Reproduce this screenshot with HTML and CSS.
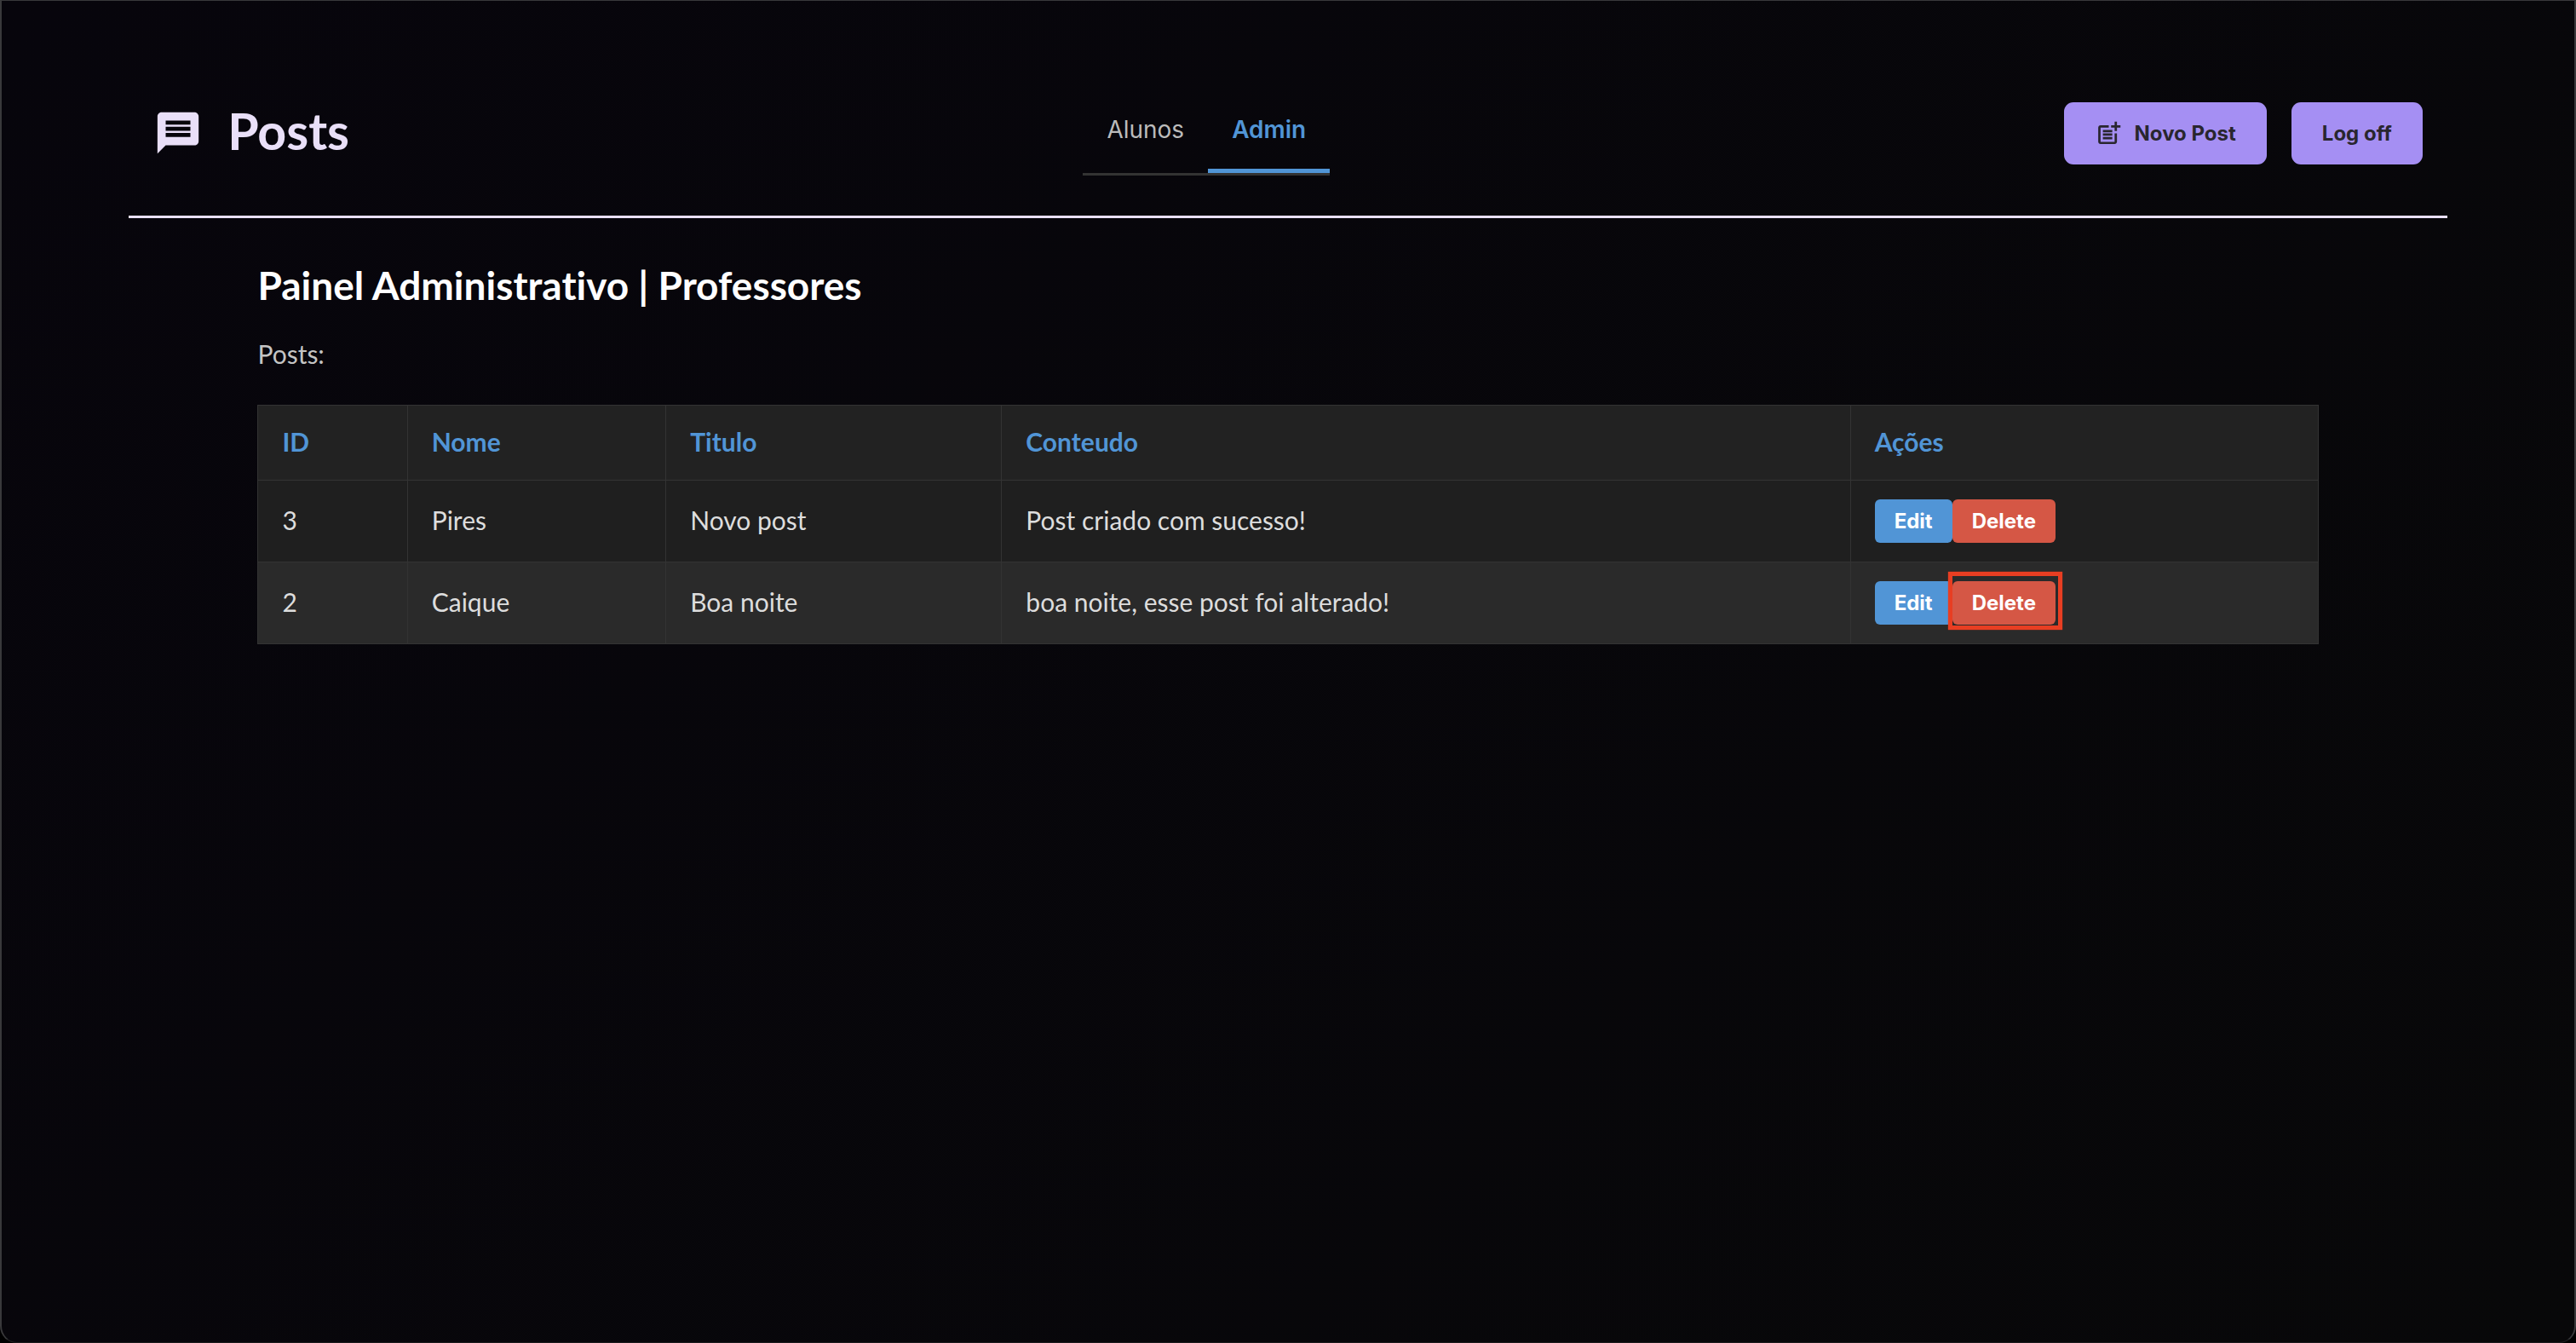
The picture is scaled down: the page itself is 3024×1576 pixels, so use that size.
FILE: index.html
```html
<!DOCTYPE html>
<html lang="pt-BR">
<head>
<meta charset="utf-8">
<meta name="viewport" content="width=device-width, initial-scale=1">
<title>Posts</title>
<link rel="stylesheet" href="styles.css">
</head>
<body>
<div class="app">
  <header class="header">
    <div class="brand">
      <svg class="brand-icon" viewBox="0 0 24 24" fill="currentColor" aria-hidden="true"><path d="M20 2H4c-1.1 0-1.99.9-1.99 2L2 22l4-4h14c1.1 0 2-.9 2-2V4c0-1.1-.9-2-2-2zm-2 12H6v-2h12v2zm0-3H6V9h12v2zm0-3H6V6h12v2z"/></svg>
      <h1 class="brand-title">Posts</h1>
    </div>
    <nav class="tabs">
      <a class="tab" href="#alunos">Alunos</a>
      <a class="tab tab-active" href="#admin" aria-current="page">Admin</a>
    </nav>
    <div class="header-actions">
      <button class="button" type="button">
        <svg class="button-icon" viewBox="0 0 24 24" fill="currentColor" aria-hidden="true"><path d="M17 19.22H5V7h7V5H5c-1.1 0-2 .9-2 2v12c0 1.1.9 2 2 2h12c1.1 0 2-.9 2-2v-7h-2v7.22z"/><path d="M19 2h-2v3h-3c.01.01 0 2 0 2h3v2.99c.01.01 2 0 2 0V7h3V5h-3V2zM7 9h8v2H7zM7 12v2h8v-2h-3zM7 15h8v2H7z"/></svg>
        Novo Post
      </button>
      <button class="button" type="button">Log off</button>
    </div>
  </header>
  <main class="panel">
    <h2 class="panel-title">Painel Administrativo | Professores</h2>
    <p class="panel-label">Posts:</p>
    <table class="posts">
      <colgroup>
        <col class="col-id"><col class="col-name"><col class="col-title"><col class="col-content"><col class="col-actions">
      </colgroup>
      <thead>
        <tr><th>ID</th><th>Nome</th><th>Titulo</th><th>Conteudo</th><th>Ações</th></tr>
      </thead>
      <tbody>
        <tr>
          <td>3</td><td>Pires</td><td>Novo post</td><td>Post criado com sucesso!</td>
          <td class="actions-cell">
            <div class="actions">
              <button class="action edit" type="button">Edit</button>
              <button class="action delete" type="button">Delete</button>
            </div>
          </td>
        </tr>
        <tr>
          <td>2</td><td>Caique</td><td>Boa noite</td><td>boa noite, esse post foi alterado!</td>
          <td class="actions-cell">
            <div class="actions">
              <button class="action edit" type="button">Edit</button>
              <button class="action delete highlighted" type="button">Delete</button>
            </div>
          </td>
        </tr>
      </tbody>
    </table>
  </main>
</div>
</body>
</html>
```
FILE: styles.css
```css
* {
  box-sizing: border-box;
}

html {
  background: #000;
}

body {
  margin: 0;
  font-family: Lato, sans-serif;
  font-variant-ligatures: none;
  color: #ddd;
}

.app {
  min-height: 100vh;
  padding-top: 58px;
  border: 2px solid #39393b;
  border-top-width: 1px;
  border-bottom: 1px solid #1c1c1e;
  border-radius: 0 0 20px 20px;
  background: linear-gradient(135deg, #07050c, #080809);
}

.header {
  display: flex;
  justify-content: space-between;
  align-items: center;
  width: 90vw;
  margin: 0 auto;
  padding: 47px 29px;
  border-bottom: 3px solid #e9dff8;
}

.brand {
  display: flex;
  align-items: center;
  gap: 29px;
  color: #e9dff8;
}

.brand-icon {
  width: 58px;
  height: 58px;
}

.brand-title {
  margin: 0;
  padding-bottom: 4px;
  font-size: 59px;
  line-height: 72px;
  font-weight: 700;
}

.tabs {
  display: flex;
  border-bottom: 3px solid #333;
  font-family: Inter, sans-serif;
  font-size: 28px;
  line-height: 34px;
}

.tab {
  padding: 29px 28px;
  border-bottom: 5px solid transparent;
  color: #bbb;
  text-decoration: none;
}

.tab-active {
  border-bottom-color: #5195d6;
  color: #5195d6;
  font-weight: 600;
}

.header-actions {
  display: flex;
  justify-content: flex-end;
  gap: 29px;
}

.button {
  display: flex;
  align-items: center;
  gap: 14px;
  height: 73px;
  padding: 0 36px;
  border: 0;
  border-radius: 11px;
  background: #a58ff3;
  color: #29262f;
  font-family: Inter, sans-serif;
  font-size: 24px;
  font-weight: 700;
}

.button-icon {
  width: 33px;
  height: 33px;
}

.panel {
  width: 80vw;
  margin: 0 auto;
  padding: 51px 0;
}

.panel-title {
  margin: 0 0 34px;
  color: #fff;
  font-size: 46px;
  line-height: 56px;
  font-weight: 700;
}

.panel-label {
  margin: 0 0 42px;
  color: #c4c4c4;
  font-size: 30px;
  line-height: 36px;
}

.posts {
  width: 100%;
  table-layout: fixed;
  border-collapse: collapse;
  background: #1f1f1f;
  font-size: 30px;
  line-height: 36px;
}

.col-id { width: 7.25%; }
.col-name { width: 12.55%; }
.col-title { width: 16.3%; }
.col-content { width: 41.2%; }
.col-actions { width: 22.7%; }

.posts th,
.posts td {
  border: 1px solid #333;
  text-align: left;
}

.posts th {
  padding: 24px 28px 27px;
  background: #222;
  color: #5195d6;
  font-weight: 700;
}

.posts td {
  padding: 18px 28px 22px;
}

.posts tbody tr:nth-child(even) {
  background: #2a2a2a;
}

.posts .actions-cell {
  padding: 22px 28px;
}

.actions {
  display: flex;
}

.action {
  position: relative;
  height: 51px;
  padding: 0 23px;
  border: 0;
  border-radius: 6px;
  color: #fff;
  font-family: Inter, sans-serif;
  font-size: 24px;
  font-weight: 700;
}

.edit {
  background: #5195d6;
}

.delete {
  background: #d55745;
}

.highlighted::after {
  content: "";
  position: absolute;
  inset: -11px -8px -6px -5px;
  border: 5px solid #e83e22;
  box-shadow: 0 0 1px #e83e22;
}
```
